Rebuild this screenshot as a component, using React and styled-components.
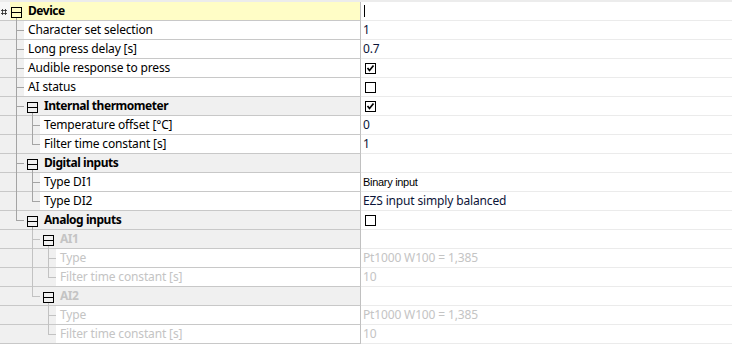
import styled, { createGlobalStyle, css } from "styled-components"

const GlobalStyle = createGlobalStyle`
  html, body {
    margin: 0;
    padding: 0;
    background: #ffffff;
  }
  body {
    font-family: "Noto Sans", "Open Sans", sans-serif;
    font-size: 12px;
    letter-spacing: -0.15px;
    color: #000000;
  }
`

const tree = {
  label: "Device", value: { caret: true }, selected: true,
  children: [
    { label: "Character set selection", value: { text: "1" } },
    { label: "Long press delay [s]", value: { text: "0.7" } },
    { label: "Audible response to press", value: { check: true } },
    { label: "AI status", value: { check: false } },
    {
      label: "Internal thermometer", value: { check: true },
      children: [
        { label: "Temperature offset [°C]", value: { text: "0" } },
        { label: "Filter time constant [s]", value: { text: "1" } },
      ],
    },
    {
      label: "Digital inputs",
      children: [
        { label: "Type DI1", value: { text: "Binary input", narrow: true } },
        { label: "Type DI2", value: { text: "EZS input simply balanced" } },
      ],
    },
    {
      label: "Analog inputs", value: { check: false },
      children: [
        {
          label: "AI1", muted: true,
          children: [
            { label: "Type", muted: true, value: { text: "Pt1000 W100 = 1,385", muted: true } },
            { label: "Filter time constant [s]", muted: true, value: { text: "10", muted: true } },
          ],
        },
        {
          label: "AI2", muted: true,
          children: [
            { label: "Type", muted: true, value: { text: "Pt1000 W100 = 1,385", muted: true } },
            { label: "Filter time constant [s]", muted: true, value: { text: "10", muted: true } },
          ],
        },
      ],
    },
  ],
}

// walk the tree and work out which connector goes in each indent slot
function flatten(node, guides = [], out = []) {
  out.push({ ...node, guides, group: !!node.children })
  const kids = node.children || []
  kids.forEach((kid, i) => {
    const last = i === kids.length - 1
    const parentGuides = guides.map(g => (g === "tee" || g === "pipe" ? "pipe" : "blank"))
    flatten(kid, [...parentGuides, last ? "elbow" : "tee"], out)
  })
  return out
}

const rows = flatten(tree)

export default function App() {
  return (
    <>
      <GlobalStyle />
      <Grid>
        {rows.map((row, i) => (
          <Row key={i}>
            <NameCell $selected={row.selected}>
              <Lead $selected={row.selected}>{row.selected && <Grip />}</Lead>
              {row.guides.map((g, j) => (
                <Guide key={j} $kind={g} $muted={row.muted} />
              ))}
              {row.group ? (
                <GroupLabel $muted={row.muted} $selected={row.selected}>
                  <Toggle $muted={row.muted} />
                  {row.label}
                </GroupLabel>
              ) : (
                <LeafLabel $muted={row.muted}>{row.label}</LeafLabel>
              )}
            </NameCell>
            <ValueCell>
              {row.value?.caret && <Caret />}
              {row.value?.text && (
                <ValueText $muted={row.value.muted} $narrow={row.value.narrow}>
                  {row.value.text}
                </ValueText>
              )}
              {row.value && "check" in row.value && (
                <CheckBox>
                  {row.value.check && (
                    <svg width="9" height="9" viewBox="0 0 9 9">
                      <polyline points="1.5,4 3.5,6.5 7.5,1.5" fill="none" stroke="#000" strokeWidth="1.7" />
                    </svg>
                  )}
                </CheckBox>
              )}
            </ValueCell>
          </Row>
        ))}
      </Grid>
    </>
  )
}

const Grid = styled.div`
  width: 732px;
  height: 344px;
  overflow: hidden;
  box-sizing: border-box;
  border-top: 2px solid #ececec;
`

const Row = styled.div`
  display: flex;
  height: 19px;
`

const NameCell = styled.div`
  width: 361px;
  flex: none;
  display: flex;
  box-sizing: border-box;
  background: ${p => (p.$selected ? "#fffdc6" : "#f0f0f0")};
  border-bottom: 1px solid #c8c8c8;
  border-right: 1px solid #c0c0c0;
`

const Lead = styled.span`
  position: relative;
  flex: none;
  width: ${p => (p.$selected ? "10px" : "8px")};
  background: ${p => (p.$selected ? "#f7f7f7" : "transparent")};
`

const Grip = styled.span`
  position: absolute;
  left: 1px;
  top: 7px;
  width: 6px;
  height: 6px;
  background-image: radial-gradient(circle, #333333 45%, transparent 60%);
  background-size: 3px 3px;
`

const Guide = styled.span`
  position: relative;
  flex: none;
  width: 16px;
  ${p => p.$kind !== "blank" && css`
    &::before {
      content: "";
      position: absolute;
      left: 8px;
      top: 0;
      width: 1px;
      height: ${p.$kind === "elbow" ? "10px" : "calc(100% + 1px)"};
      background: ${p.$muted ? "#c2c2c2" : "#a4a4a4"};
    }
  `}
  ${p => (p.$kind === "tee" || p.$kind === "elbow") && css`
    &::after {
      content: "";
      position: absolute;
      left: 8px;
      top: 9px;
      width: 8px;
      height: 1px;
      background: ${p.$muted ? "#c2c2c2" : "#a4a4a4"};
    }
  `}
`

const Toggle = styled.span`
  position: relative;
  flex: none;
  align-self: flex-start;
  width: 11px;
  height: 11px;
  box-sizing: border-box;
  margin: 5px 6px 0 3px;
  border: 1px solid #000000;
  &::before {
    content: "";
    position: absolute;
    left: 0;
    right: 0;
    top: 4px;
    height: 1px;
    background: #000000;
  }
  &::after {
    content: "";
    position: absolute;
    left: 4px;
    top: calc(100% + 1px);
    width: 1px;
    height: 3px;
    background: ${p => (p.$muted ? "#c2c2c2" : "#a4a4a4")};
  }
`

const GroupLabel = styled.span`
  flex: 1;
  display: flex;
  align-items: center;
  line-height: 18px;
  font-weight: 700;
  letter-spacing: -0.45px;
  margin-left: ${p => (p.$selected ? "-2px" : "0")};
  color: ${p => (p.$muted ? "#c4c4c4" : "#000000")};
  white-space: nowrap;
`

const LeafLabel = styled.span`
  flex: 1;
  line-height: 18px;
  padding-left: 4px;
  background: #ffffff;
  color: ${p => (p.$muted ? "#c4c4c4" : "#000000")};
  white-space: nowrap;
`

const ValueCell = styled.div`
  flex: 1;
  display: flex;
  align-items: center;
  height: 19px;
  box-sizing: border-box;
  padding-left: 2px;
  background: #ffffff;
  border-bottom: 1px solid #ebebeb;
`

const ValueText = styled.span`
  line-height: 18px;
  white-space: nowrap;
  color: ${p => (p.$muted ? "#c4c4c4" : "#0c1438")};
  ${p => p.$narrow && css`
    font-family: "Liberation Sans", Arial, sans-serif;
    font-size: 11px;
    letter-spacing: -0.3px;
    color: #000000;
  `}
`

const Caret = styled.span`
  width: 1px;
  height: 12px;
  margin-left: 1px;
  background: #000000;
`

const CheckBox = styled.span`
  display: flex;
  align-items: center;
  justify-content: center;
  width: 11px;
  height: 11px;
  box-sizing: border-box;
  margin-left: 2px;
  border: 1px solid #000000;
  background: #ffffff;
`
